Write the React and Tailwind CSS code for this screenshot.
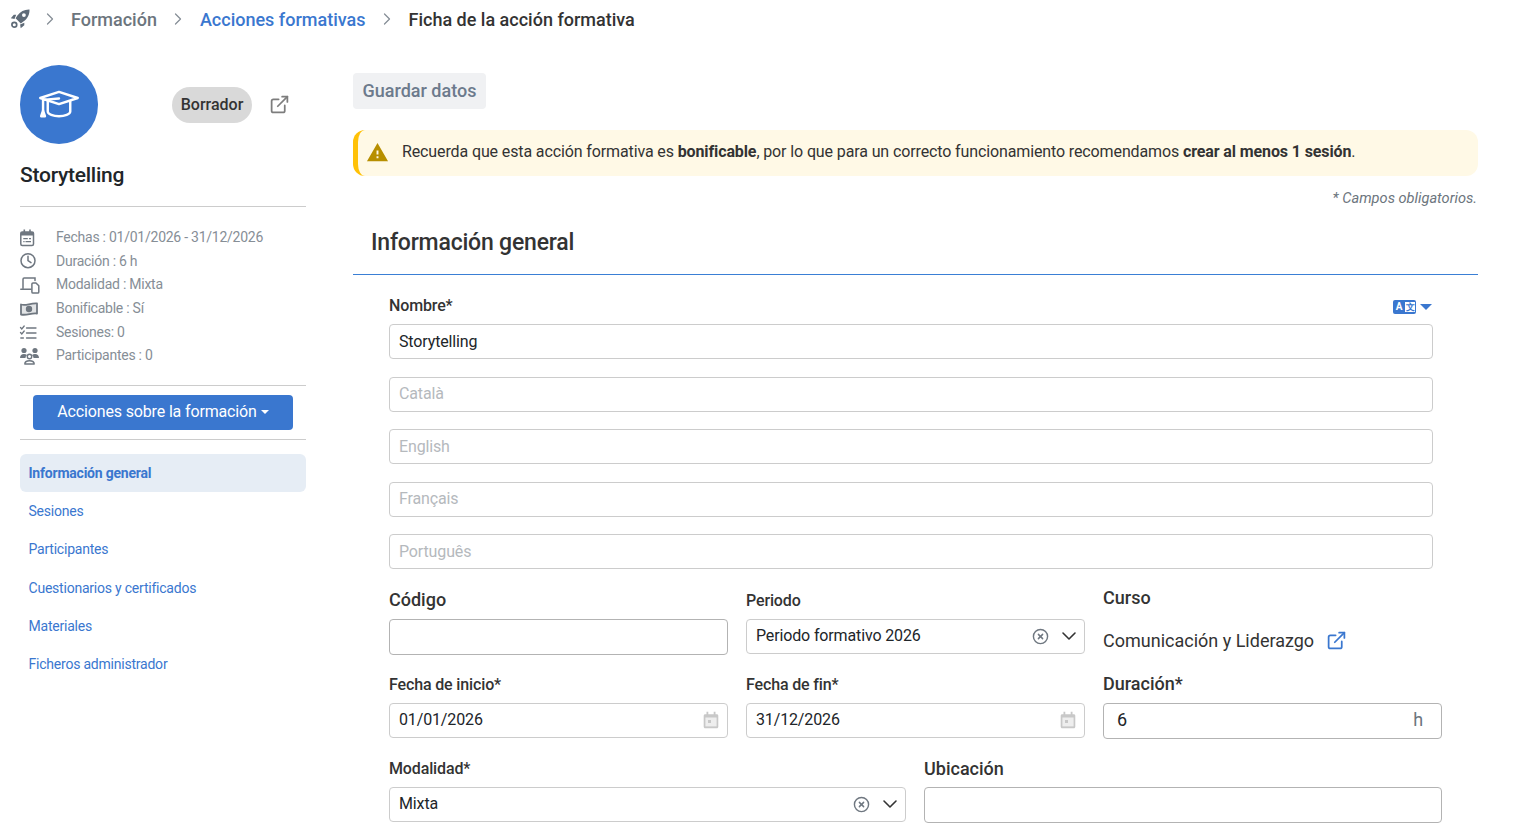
import { MdWarning } from 'react-icons/md'
import { LuChevronRight, LuChevronDown, LuExternalLink, LuCircleX } from 'react-icons/lu'

function RocketIcon() {
  return (
    <svg viewBox="0 0 20 20" className="w-[20px] h-[20px] text-[#5f6b78]" fill="currentColor">
      <path d="M19.5.5C14.5.3 10.4 2.4 7.4 6.6L5.6 9.2l5.2 5.2 2.6-1.8c4.200-3 6.300-7.100 6.100-12.100Z" />
      <circle cx="13.900" cy="6.100" r="1.900" fill="#fff" />
      <path d="M6.200 5.700H3.800L.8 9.300l3.700.6ZM14.300 13.800v2.400l-3.600 3-.6-3.700Z" />
      <circle cx="4.300" cy="15.700" r="2.400" fill="none" stroke="currentColor" strokeWidth="1.700" />
    </svg>
  )
}

function GradCap() {
  return (
    <svg viewBox="0 0 44 32" className="w-[42px] h-[30px]" fill="none" stroke="#fff" strokeWidth="2.600" strokeLinejoin="round" strokeLinecap="round">
      <path d="M22 2 42 8.500 22 15 2 8.500Z" />
      <path d="M10 12v11c0 3 6 5 12 5s12-2 12-5V12" />
      <path d="M22 9 5 10.500V22" />
      <path d="M5 22l-2 6h4z" fill="#fff" />
    </svg>
  )
}

function TranslateIcon() {
  return (
    <span className="flex items-center gap-[4px] mt-[4px] mr-[1px]">
      <span className="w-[23px] h-[14px] rounded-[2px] bg-[#3a77cf] flex items-center pl-[2px] gap-[2px]">
        <span className="text-[10px] leading-none font-bold text-white w-[8px] text-center">A</span>
        <span className="w-[10px] h-[10px] bg-white text-[#3a77cf] text-[9px] leading-[10px] font-bold text-center">文</span>
      </span>
      <span className="w-0 h-0 border-x-[6.5px] border-x-transparent border-t-[6px] border-t-[#3a77cf]" />
    </span>
  )
}

// iconos de la ficha, dibujados a mano en una caja de 22x20
const metaIcons = {
  fechas: (
    <>
      <rect x="1.800" y="4" width="12.700" height="13.500" rx="1.500" fill="none" stroke="currentColor" strokeWidth="1.500" />
      <path d="M1.800 4h12.700v3.500H1.800zM4.500 1.500h1.600V5H4.500zM10.200 1.500h1.600V5h-1.600zM4.300 10h4.500v1.300H4.300zM10 10h2v1.300h-2zM6.500 13h5.500v1.300H6.500zM4.300 13h1.300v1.300H4.300z" />
    </>
  ),
  duracion: (
    <>
      <circle cx="9" cy="9.700" r="7" fill="none" stroke="currentColor" strokeWidth="1.500" />
      <path d="M9 5.200v4.500l3 2" fill="none" stroke="currentColor" strokeWidth="1.500" strokeLinecap="round" />
    </>
  ),
  modalidad: (
    <>
      <path d="M4 13V4.200C4 3.500 4.500 3 5.200 3H16v2.500M1.800 14.200H12" fill="none" stroke="currentColor" strokeWidth="1.500" strokeLinecap="round" />
      <path d="M14 8h3l2.800 2.800v6.100c0 .6-.5 1.100-1.100 1.100H14c-.6 0-1.100-.5-1.100-1.100V9.100C12.900 8.500 13.400 8 14 8Z" fill="none" stroke="currentColor" strokeWidth="1.500" strokeLinejoin="round" />
    </>
  ),
  bonificable: (
    <>
      <path d="M2 5.500c5 1.600 9-1.500 16-1v10c-6-.8-10 2.300-16 1Z" fill="currentColor" fillOpacity="0.200" stroke="currentColor" strokeWidth="1.800" strokeLinejoin="round" />
      <circle cx="10" cy="10" r="3.200" />
    </>
  ),
  sesiones: (
    <path d="M1.500 5.500 2.800 7l2.400-3M1.500 10.500 2.800 12l2.400-3M7.500 6h9.500M7.500 11h9.500M7.500 16h9.500M1.800 16h2.600" fill="none" stroke="currentColor" strokeWidth="1.300" strokeLinecap="round" />
  ),
  participantes: (
    <>
      <circle cx="5" cy="4.500" r="2.600" />
      <circle cx="16" cy="4.500" r="2.600" />
      <path d="M1 12c0-2.400 1.600-4 4-4 1.200 0 2.200.4 3 1.100-.8.800-1.400 1.800-1.500 2.900ZM20 12c0-2.400-1.600-4-4-4-1.200 0-2.200.4-3 1.100.8.800 1.400 1.800 1.500 2.900Z" />
      <circle cx="10.500" cy="10.500" r="2.200" fill="none" stroke="currentColor" strokeWidth="1.400" />
      <path d="M5.800 18c0-2 1.700-3.200 4.700-3.200s4.700 1.200 4.700 3.200Z" fill="none" stroke="currentColor" strokeWidth="1.400" strokeLinejoin="round" />
    </>
  ),
}

const metaRows = [
  { icon: 'fechas', text: 'Fechas : 01/01/2026 - 31/12/2026' },
  { icon: 'duracion', text: 'Duración : 6 h' },
  { icon: 'modalidad', text: 'Modalidad : Mixta' },
  { icon: 'bonificable', text: 'Bonificable : Sí' },
  { icon: 'sesiones', text: 'Sesiones: 0' },
  { icon: 'participantes', text: 'Participantes : 0' },
]

const navItems = ['Sesiones', 'Participantes', 'Cuestionarios y certificados', 'Materiales', 'Ficheros administrador']

function Sidebar() {
  return (
    <aside className="w-[286px] shrink-0">
      <div className="flex items-center h-[79px]">
        <div className="w-[78px] h-[79px] rounded-full bg-[#3a77cf] flex items-center justify-center">
          <GradCap />
        </div>
        <span className="ml-[74px] w-[80px] h-[36px] rounded-full bg-[#d9d9d9] flex items-center justify-center text-[16px] font-medium text-[#333]">Borrador</span>
        <LuExternalLink className="ml-[17px] w-[21px] h-[21px] text-[#7d7d7d]" />
      </div>
      <h2 className="mt-[18px] text-[21px] tracking-[-0.25px] leading-[26px] font-medium text-[#212529]">Storytelling</h2>
      <div className="mt-[18px] border-t border-[#ccc] pt-[19px] pb-[17px]">
        {metaRows.map(({ icon, text }) => (
          <div key={text} className="flex items-center h-[23.6px] text-[14px] tracking-[-0.25px] text-[#868e96]">
            <svg viewBox="0 0 22 20" className="w-[22px] h-[20px] text-[#6f7780] -ml-[1px] shrink-0" fill="currentColor">
              {metaIcons[icon]}
            </svg>
            <span className="ml-[15px]">{text}</span>
          </div>
        ))}
      </div>
      <div className="border-t border-[#ccc] pt-[9px] pb-[9px] flex justify-center">
        <button className="w-[260px] h-[35px] rounded-[4px] bg-[#3a77cf] text-white text-[16px] tracking-[-0.15px] flex items-center justify-center gap-[4px]">
          Acciones sobre la formación
          <span className="w-0 h-0 border-x-[4px] border-x-transparent border-t-[4px] border-t-white" />
        </button>
      </div>
      <nav className="border-t border-[#ccc] pt-[14px] text-[14px] tracking-[-0.22px] text-[#3a77cf]">
        <div className="h-[38px] mb-[1px] pt-[1px] rounded-[6px] bg-[#e6edf5] flex items-center px-[8.5px] font-bold">Información general</div>
        {navItems.map((item) => (
          <div key={item} className="h-[38.2px] flex items-center px-[8.5px]">{item}</div>
        ))}
      </nav>
    </aside>
  )
}

function Field({ children, className = '', strong = false, height = 'h-[35px]' }) {
  return (
    <div className={`${height} rounded-[4px] border ${strong ? 'border-[#b3b3b3]' : 'border-[#ccc]'} px-[9px] flex items-center text-[16px] tracking-[-0.14px] text-[#212529] ${className}`}>
      {children}
    </div>
  )
}

function SelectControls() {
  return (
    <span className="ml-auto -mr-[6px] flex items-center gap-[8.5px]">
      <LuCircleX className="w-[17px] h-[17px] text-[#6f7780]" />
      <LuChevronDown className="w-[24px] h-[24px] text-[#333]" strokeWidth={1.6} />
    </span>
  )
}

function CalendarIcon() {
  return (
    <svg viewBox="0 0 16 18" className="ml-auto -mr-[1px] w-[16px] h-[18px] text-[#c8c8c8]" fill="currentColor">
      <path d="M3.500.8h1.800v2.400h5.400V.8h1.800v2.400h1.300c.9 0 1.500.6 1.500 1.500v11c0 .9-.6 1.500-1.500 1.500H2.200c-.9 0-1.500-.6-1.500-1.500v-11c0-.9.6-1.500 1.500-1.500h1.300Z" />
      <path d="M2.400 6.500h11.200v8.900H2.400z" fill="#eee" />
      <path d="M5 9h3v3H5z" />
    </svg>
  )
}

function Label({ children, big = false }) {
  return <div className={`${big ? 'text-[18px]' : 'text-[16px] tracking-[-0.14px] pt-[1px] -mb-[1px]'} font-medium text-[#333] leading-[24px]`}>{children}</div>
}

function Form() {
  return (
    <div className="pl-[36px] pr-[36px]">
      <div className="w-[1044px] mt-[18px]">
        <div className="flex items-center justify-between h-[24px] mb-[7px]">
          <Label>Nombre*</Label>
          <TranslateIcon />
        </div>
        <Field>Storytelling</Field>
        {['Català', 'English', 'Français', 'Português'].map((lang) => (
          <Field key={lang} className="mt-[17.6px] !text-[#b5b9bd]">{lang}</Field>
        ))}
      </div>
      <div className="grid grid-cols-3 gap-x-[18px] w-[1053px] mt-[18.6px]">
        <div>
          <Label big>Código</Label>
          <Field strong height="h-[36px]" className="mt-[7px]" />
        </div>
        <div>
          <Label>Periodo</Label>
          <Field className="mt-[7px]">Periodo formativo 2026<SelectControls /></Field>
        </div>
        <div>
          <div className="-mt-[2px]"><Label big>Curso</Label></div>
          <div className="mt-[19px] flex items-center text-[18px] text-[#333] leading-[24px]">
            Comunicación y Liderazgo
            <LuExternalLink className="ml-[12px] w-[21px] h-[21px] text-[#3a77cf]" />
          </div>
        </div>
      </div>
      <div className="grid grid-cols-3 gap-x-[18px] w-[1053px] mt-[17px]">
        <div>
          <Label>Fecha de inicio*</Label>
          <Field className="mt-[7px]">01/01/2026<CalendarIcon /></Field>
        </div>
        <div>
          <Label>Fecha de fin*</Label>
          <Field className="mt-[7px]">31/12/2026<CalendarIcon /></Field>
        </div>
        <div>
          <Label big>Duración*</Label>
          <Field strong height="h-[36px]" className="mt-[7px] !text-[18px] !pl-[13px] !pr-[18px] pb-[2px]">
            6<span className="ml-auto text-[#6c757d]">h</span>
          </Field>
        </div>
      </div>
      <div className="grid grid-cols-[517px_1fr] gap-x-[18px] w-[1053px] mt-[17px]">
        <div>
          <Label>Modalidad*</Label>
          <Field className="mt-[7px]">Mixta<SelectControls /></Field>
        </div>
        <div>
          <div className="pt-[1px] -mb-[1px]"><Label big>Ubicación</Label></div>
          <Field strong height="h-[36px]" className="mt-[7px]" />
        </div>
      </div>
    </div>
  )
}

export default function App() {
  return (
    <div className="h-screen overflow-hidden bg-white font-['Roboto',sans-serif]">
      <header className="h-[38px] flex items-center pl-[10px] text-[18px] font-medium">
        <RocketIcon />
        <LuChevronRight className="ml-[10px] mr-[11px] w-[20px] h-[20px] text-[#868e96]" strokeWidth={1.5} />
        <span className="text-[#6c757d]">Formación</span>
        <LuChevronRight className="ml-[11px] mr-[12px] w-[20px] h-[20px] text-[#868e96]" strokeWidth={1.5} />
        <span className="text-[#3a77cf]">Acciones formativas</span>
        <LuChevronRight className="ml-[11px] mr-[12px] w-[20px] h-[20px] text-[#868e96]" strokeWidth={1.5} />
        <span className="text-[#333]">Ficha de la acción formativa</span>
      </header>
      <div className="flex pl-[20px] pr-[37px] pt-[27px] gap-[47px]">
        <Sidebar />
        <main className="flex-1 min-w-0 pt-[8px]">
          <button className="h-[36px] w-[133px] pb-[2px] rounded-[4px] bg-[#f0f1f3] text-[18px] font-medium text-[#6c7a8c]">Guardar datos</button>
          <div className="mt-[21px] h-[46px] pb-[2px] rounded-[12px] border-l-[5px] border-[#ffc107] bg-[#fff9e6] flex items-center pl-[8px] text-[16px] tracking-[-0.12px] text-[#333]">
            <MdWarning className="w-[23px] h-[23px] text-[#b78f00]" />
            <span className="ml-[13px]">Recuerda que esta acción formativa es <b className="font-bold">bonificable</b>, por lo que para un correcto funcionamiento recomendamos <b className="font-bold">crear al menos 1 sesión</b>.</span>
          </div>
          <p className="mt-[13px] text-right text-[14.6px] leading-[18px] italic text-[#6c757d] pr-[1px]">* Campos obligatorios.</p>
          <div className="border-b border-b-[#3a7fd5] h-[68px] pl-[18px] pt-[20px]">
            <h1 className="text-[23px] tracking-[-0.2px] leading-[32px] font-medium text-[#333]">Información general</h1>
          </div>
          <Form />
        </main>
      </div>
    </div>
  )
}
